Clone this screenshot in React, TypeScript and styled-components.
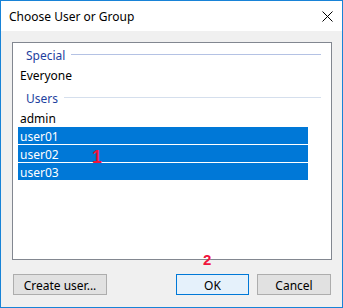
import React from "react";
import styled, { createGlobalStyle } from "styled-components";

const GlobalStyle = createGlobalStyle`
  html, body {
    margin: 0;
    padding: 0;
    background: #ffffff;
  }
  body {
    font-family: "Noto Sans", "Open Sans", "DejaVu Sans", sans-serif;
    font-size: 12px;
    color: #000000;
  }
`;

const StyledWindow = styled.div`
  position: relative;
  width: 343px;
  height: 308px;
  box-sizing: border-box;
  border: 1px solid #1883d7;
  background: #f0f0f0;
  display: flex;
  flex-direction: column;
`;

const TitleBar = styled.div`
  height: 30px;
  background: #ffffff;
  display: flex;
  align-items: center;
  justify-content: space-between;
  padding: 0 9px 0 8px;
  & > span.title {
    font-size: 12px;
    line-height: 16px;
    margin-top: 2px;
  }
  & > svg {
    display: block;
  }
`;

const Body = styled.div`
  flex: 1;
  display: flex;
  flex-direction: column;
  padding: 11px 10px 0 11px;
`;

const ListBox = styled.div`
  height: 218px;
  box-sizing: border-box;
  border: 1px solid #828790;
  background: #ffffff;
  padding-top: 2px;
`;

const GroupHeader = styled.div<{ $line: string; $gap: number }>`
  display: flex;
  align-items: center;
  height: 18px;
  margin-top: ${(p) => p.$gap}px;
  margin-bottom: 3px;
  padding-left: 13px;
  padding-right: 10px;
  color: #1e3fa0;
  & > span.label {
    white-space: nowrap;
    line-height: 16px;
    padding-top: 3px;
  }
  & > div.rule {
    flex: 1;
    height: 1px;
    margin-left: 6px;
    background: ${(p) => p.$line};
  }
`;

const Item = styled.div<{ $selected?: boolean }>`
  width: 290px;
  height: 17px;
  line-height: 15px;
  padding-top: 2px;
  margin: 1px 0 0 5px;
  padding-left: 2px;
  box-sizing: border-box;
  background: ${(p) => (p.$selected ? "#0078d7" : "transparent")};
  color: ${(p) => (p.$selected ? "#ffffff" : "#000000")};
`;

const ButtonRow = styled.div`
  display: flex;
  align-items: center;
  gap: 8px;
  margin-top: 14px;
  padding: 0 1px;
  & > div.spacer {
    flex: 1;
  }
`;

const Button = styled.div<{ $width: number; $default?: boolean }>`
  width: ${(p) => p.$width}px;
  height: 21px;
  box-sizing: border-box;
  display: flex;
  align-items: center;
  justify-content: center;
  padding-top: 1px;
  border: 1px solid ${(p) => (p.$default ? "#0078d7" : "#adadad")};
  background: ${(p) => (p.$default ? "#e5f1fb" : "#e1e1e1")};
  font-size: 12px;
`;

const Marker = styled.div<{ $left: number; $top: number; $size: number }>`
  position: absolute;
  left: ${(p) => p.$left}px;
  top: ${(p) => p.$top}px;
  font-family: "Liberation Sans", Arial, sans-serif;
  font-weight: bold;
  font-size: ${(p) => p.$size}px;
  line-height: 1;
  color: #f0143c;
`;

const users = ["user01", "user02", "user03"];

export default function App() {
  return (
    <>
      <GlobalStyle />
      <StyledWindow>
        <TitleBar>
          <span className="title">Choose User or Group</span>
          <svg width="11" height="11" viewBox="0 0 11 11">
            <path d="M0.5 0.5 L10.5 10.5 M10.5 0.5 L0.5 10.5" stroke="#000" strokeWidth="1" />
          </svg>
        </TitleBar>
        <Body>
          <ListBox>
            <GroupHeader $line="#b4c2e4" $gap={0}>
              <span className="label">Special</span>
              <div className="rule" />
            </GroupHeader>
            <Item>Everyone</Item>
            <GroupHeader $line="#d5dfed" $gap={5}>
              <span className="label">Users</span>
              <div className="rule" />
            </GroupHeader>
            <Item>admin</Item>
            {users.map((u) => (
              <Item key={u} $selected>
                {u}
              </Item>
            ))}
          </ListBox>
          <ButtonRow>
            <Button $width={94}>Create user...</Button>
            <div className="spacer" />
            <Button $width={73} $default>
              OK
            </Button>
            <Button $width={74}>Cancel</Button>
          </ButtonRow>
        </Body>
        <Marker $left={91} $top={147} $size={18}>
          1
        </Marker>
        <Marker $left={202} $top={251} $size={15}>
          2
        </Marker>
      </StyledWindow>
    </>
  );
}
